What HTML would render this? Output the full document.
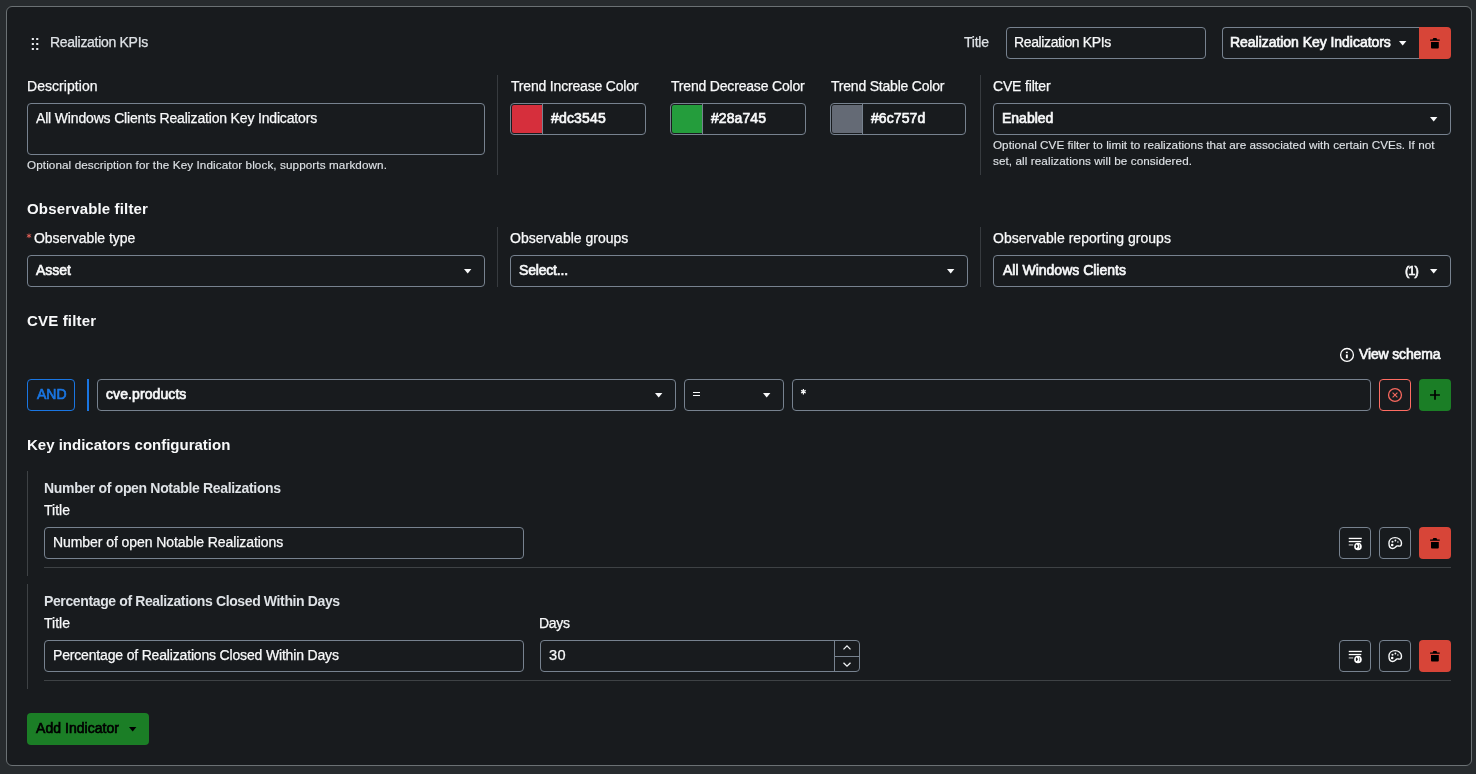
<!DOCTYPE html><html><head><meta charset="utf-8"><title>Realization KPIs</title><style>
*{box-sizing:border-box;margin:0;padding:0}
html,body{width:1476px;height:774px;overflow:hidden;background:#272b2e;font-family:"Liberation Sans",sans-serif}
.a{position:absolute}
.card{left:6px;top:6px;width:1466px;height:760px;border:1px solid #6b7174;border-radius:6px;background:#181b1e}
.box{border:1px solid #77828f;border-radius:4px}
.t{white-space:pre;will-change:transform;-webkit-font-smoothing:antialiased}
.sep{width:1px;background:#373b3f}
.hr{height:1px;background:#3e4245}
svg{position:absolute;overflow:visible}
</style></head><body>
<div class="a card"></div>
<svg style="left:0;top:0" width="60" height="60"><rect x="31.8" y="38" width="2.1" height="2" fill="#e6e9ec"/><rect x="31.8" y="43" width="2.1" height="2" fill="#e6e9ec"/><rect x="31.8" y="48" width="2.1" height="2" fill="#e6e9ec"/><rect x="36.2" y="38" width="2.1" height="2" fill="#e6e9ec"/><rect x="36.2" y="43" width="2.1" height="2" fill="#e6e9ec"/><rect x="36.2" y="48" width="2.1" height="2" fill="#e6e9ec"/></svg>
<div class="a box" style="left:1006px;top:27px;width:200px;height:32px;"></div>
<div class="a box" style="left:1222px;top:27px;width:197px;height:32px;border-right:none;border-radius:4px 0 0 4px"></div>
<div class="a " style="left:1419px;top:27px;width:32px;height:32px;background:#d74538;border:none;border-radius:0 4px 4px 0"></div>
<svg style="left:1399.1px;top:40.8px" width="7.4" height="4.6" viewBox="0 0 7.4 4.6"><path d="M0,0H7.4L3.7,4.6Z" fill="#f8f9fa"/></svg>
<div class="a box" style="left:27px;top:103px;width:458px;height:52px;"></div>
<div class="a box" style="left:510px;top:103px;width:136px;height:32px;"></div>
<div class="a " style="left:512px;top:105px;width:29.5px;height:28px;background:#d62f3c;border-radius:2px 0 0 2px"></div>
<div class="a " style="left:542px;top:103px;width:1px;height:32px;background:#77828f"></div>
<div class="a box" style="left:670px;top:103px;width:136px;height:32px;"></div>
<div class="a " style="left:672px;top:105px;width:29.5px;height:28px;background:#249d3c;border-radius:2px 0 0 2px"></div>
<div class="a " style="left:702px;top:103px;width:1px;height:32px;background:#77828f"></div>
<div class="a box" style="left:830px;top:103px;width:136px;height:32px;"></div>
<div class="a " style="left:832px;top:105px;width:29.5px;height:28px;background:#646a75;border-radius:2px 0 0 2px"></div>
<div class="a " style="left:862px;top:103px;width:1px;height:32px;background:#77828f"></div>
<div class="a box" style="left:993px;top:103px;width:458px;height:32px;"></div>
<svg style="left:1430.1px;top:116.8px" width="7.4" height="4.6" viewBox="0 0 7.4 4.6"><path d="M0,0H7.4L3.7,4.6Z" fill="#f8f9fa"/></svg>
<div class="a sep" style="left:497px;top:75px;width:1px;height:100px;"></div>
<div class="a sep" style="left:497px;top:227px;width:1px;height:60px;"></div>
<div class="a sep" style="left:980px;top:75px;width:1px;height:100px;"></div>
<div class="a sep" style="left:980px;top:227px;width:1px;height:60px;"></div>
<div class="a box" style="left:27px;top:255px;width:458px;height:32px;"></div>
<svg style="left:464.1px;top:268.8px" width="7.4" height="4.6" viewBox="0 0 7.4 4.6"><path d="M0,0H7.4L3.7,4.6Z" fill="#f8f9fa"/></svg>
<div class="a box" style="left:510px;top:255px;width:458px;height:32px;"></div>
<svg style="left:947.1px;top:268.8px" width="7.4" height="4.6" viewBox="0 0 7.4 4.6"><path d="M0,0H7.4L3.7,4.6Z" fill="#f8f9fa"/></svg>
<div class="a box" style="left:993px;top:255px;width:458px;height:32px;"></div>
<svg style="left:1430.1px;top:268.8px" width="7.4" height="4.6" viewBox="0 0 7.4 4.6"><path d="M0,0H7.4L3.7,4.6Z" fill="#f8f9fa"/></svg>
<div class="a box" style="left:27px;top:379px;width:48px;height:32px;border-color:#1a76e2"></div>
<div class="a " style="left:87px;top:379px;width:2px;height:32px;background:#1a76e2"></div>
<div class="a box" style="left:97px;top:379px;width:579px;height:32px;"></div>
<svg style="left:655.1px;top:392.8px" width="7.4" height="4.6" viewBox="0 0 7.4 4.6"><path d="M0,0H7.4L3.7,4.6Z" fill="#f8f9fa"/></svg>
<div class="a box" style="left:684px;top:379px;width:100px;height:32px;"></div>
<svg style="left:763.1px;top:392.8px" width="7.4" height="4.6" viewBox="0 0 7.4 4.6"><path d="M0,0H7.4L3.7,4.6Z" fill="#f8f9fa"/></svg>
<div class="a box" style="left:792px;top:379px;width:579px;height:32px;"></div>
<div class="a box" style="left:1379px;top:379px;width:32px;height:32px;border-color:#ff6d63"></div>
<div class="a box" style="left:1419px;top:379px;width:32px;height:32px;background:#1b7e26;border:none"></div>
<div class="a " style="left:27px;top:471px;width:1px;height:105px;background:#3e4245"></div>
<div class="a box" style="left:44px;top:527px;width:480px;height:32px;"></div>
<div class="a box" style="left:1339px;top:527px;width:32px;height:32px;"></div>
<div class="a box" style="left:1379px;top:527px;width:32px;height:32px;"></div>
<div class="a box" style="left:1419px;top:527px;width:32px;height:32px;background:#d74538;border:none"></div>
<div class="a hr" style="left:44px;top:567px;width:1407px;height:1px;"></div>
<div class="a " style="left:27px;top:584px;width:1px;height:105px;background:#3e4245"></div>
<div class="a box" style="left:44px;top:640px;width:480px;height:32px;"></div>
<div class="a box" style="left:1339px;top:640px;width:32px;height:32px;"></div>
<div class="a box" style="left:1379px;top:640px;width:32px;height:32px;"></div>
<div class="a box" style="left:1419px;top:640px;width:32px;height:32px;background:#d74538;border:none"></div>
<div class="a hr" style="left:44px;top:680px;width:1407px;height:1px;"></div>
<div class="a box" style="left:540px;top:640px;width:320px;height:32px;"></div>
<div class="a " style="left:834px;top:640px;width:1px;height:32px;background:#77828f"></div>
<div class="a " style="left:834px;top:656px;width:26px;height:1px;background:#77828f"></div>
<div class="a box" style="left:27px;top:713px;width:122px;height:32px;background:#1b7e26;border:none"></div>
<svg style="left:128.6px;top:726.8px" width="7.4" height="4.6" viewBox="0 0 7.4 4.6"><path d="M0,0H7.4L3.7,4.6Z" fill="#000"/></svg>
<div class="a t" style="left:50.00px;top:34.45px;font:400 14px/16px 'Liberation Sans',sans-serif;letter-spacing:-0.3px;color:#dee2e6;-webkit-text-stroke:0.25px currentColor">Realization KPIs</div>
<div class="a t" style="left:964.00px;top:34.45px;font:400 14px/16px 'Liberation Sans',sans-serif;letter-spacing:-0.25px;color:#dee2e6;-webkit-text-stroke:0.25px currentColor">Title</div>
<div class="a t" style="left:1014.00px;top:34.45px;font:400 14px/16px 'Liberation Sans',sans-serif;letter-spacing:-0.367px;color:#f8f9fa;-webkit-text-stroke:0.25px currentColor">Realization KPIs</div>
<div class="a t" style="left:1230.00px;top:34.45px;font:400 14px/16px 'Liberation Sans',sans-serif;letter-spacing:-0.04px;color:#f8f9fa;-webkit-text-stroke:0.65px currentColor">Realization Key Indicators</div>
<div class="a t" style="left:26.50px;top:78.45px;font:400 14px/16px 'Liberation Sans',sans-serif;letter-spacing:0.05px;color:#f8f9fa;-webkit-text-stroke:0.25px currentColor">Description</div>
<div class="a t" style="left:510.50px;top:78.45px;font:400 14px/16px 'Liberation Sans',sans-serif;letter-spacing:-0.184px;color:#f8f9fa;-webkit-text-stroke:0.25px currentColor">Trend Increase Color</div>
<div class="a t" style="left:670.50px;top:78.45px;font:400 14px/16px 'Liberation Sans',sans-serif;letter-spacing:-0.184px;color:#f8f9fa;-webkit-text-stroke:0.25px currentColor">Trend Decrease Color</div>
<div class="a t" style="left:830.50px;top:78.45px;font:400 14px/16px 'Liberation Sans',sans-serif;letter-spacing:-0.206px;color:#f8f9fa;-webkit-text-stroke:0.25px currentColor">Trend Stable Color</div>
<div class="a t" style="left:992.50px;top:78.45px;font:400 14px/16px 'Liberation Sans',sans-serif;letter-spacing:-0.167px;color:#f8f9fa;-webkit-text-stroke:0.25px currentColor">CVE filter</div>
<div class="a t" style="left:36.00px;top:110.45px;font:400 14px/16px 'Liberation Sans',sans-serif;letter-spacing:-0.167px;color:#f8f9fa;-webkit-text-stroke:0.25px currentColor">All Windows Clients Realization Key Indicators</div>
<div class="a t" style="left:551.00px;top:110.45px;font:400 14px/16px 'Liberation Sans',sans-serif;letter-spacing:0.167px;color:#f8f9fa;-webkit-text-stroke:0.65px currentColor">#dc3545</div>
<div class="a t" style="left:711.00px;top:110.45px;font:400 14px/16px 'Liberation Sans',sans-serif;letter-spacing:0.083px;color:#f8f9fa;-webkit-text-stroke:0.65px currentColor">#28a745</div>
<div class="a t" style="left:871.00px;top:110.45px;font:400 14px/16px 'Liberation Sans',sans-serif;letter-spacing:0.083px;color:#f8f9fa;-webkit-text-stroke:0.65px currentColor">#6c757d</div>
<div class="a t" style="left:1001.50px;top:110.45px;font:400 14px/16px 'Liberation Sans',sans-serif;letter-spacing:0.0px;color:#f8f9fa;-webkit-text-stroke:0.65px currentColor">Enabled</div>
<div class="a t" style="left:26.50px;top:157.25px;font:400 11.7px/16px 'Liberation Sans',sans-serif;letter-spacing:0.097px;color:#dee2e6;-webkit-text-stroke:0.12px currentColor">Optional description for the Key Indicator block, supports markdown.</div>
<div class="a t" style="left:992.50px;top:137.25px;font:400 11.7px/16px 'Liberation Sans',sans-serif;letter-spacing:0.034px;color:#dee2e6;-webkit-text-stroke:0.12px currentColor">Optional CVE filter to limit to realizations that are associated with certain CVEs. If not</div>
<div class="a t" style="left:992.50px;top:153.25px;font:400 11.7px/16px 'Liberation Sans',sans-serif;letter-spacing:0.087px;color:#dee2e6;-webkit-text-stroke:0.12px currentColor">set, all realizations will be considered.</div>
<div class="a t" style="left:26.50px;top:201.10px;font:700 15px/16px 'Liberation Sans',sans-serif;letter-spacing:0.156px;color:#f8f9fa">Observable filter</div>
<div class="a t" style="left:33.70px;top:230.45px;font:400 14px/16px 'Liberation Sans',sans-serif;letter-spacing:-0.05px;color:#f8f9fa;-webkit-text-stroke:0.25px currentColor">Observable type</div>
<div class="a t" style="left:509.50px;top:230.45px;font:400 14px/16px 'Liberation Sans',sans-serif;letter-spacing:0.0px;color:#f8f9fa;-webkit-text-stroke:0.25px currentColor">Observable groups</div>
<div class="a t" style="left:992.50px;top:230.45px;font:400 14px/16px 'Liberation Sans',sans-serif;letter-spacing:0.019px;color:#f8f9fa;-webkit-text-stroke:0.25px currentColor">Observable reporting groups</div>
<div class="a t" style="left:36.00px;top:262.45px;font:400 14px/16px 'Liberation Sans',sans-serif;letter-spacing:0.0px;color:#f8f9fa;-webkit-text-stroke:0.65px currentColor">Asset</div>
<div class="a t" style="left:519.00px;top:262.45px;font:400 14px/16px 'Liberation Sans',sans-serif;letter-spacing:-0.188px;color:#f8f9fa;-webkit-text-stroke:0.65px currentColor">Select...</div>
<div class="a t" style="left:1002.50px;top:262.45px;font:400 14px/16px 'Liberation Sans',sans-serif;letter-spacing:0.0px;color:#f8f9fa;-webkit-text-stroke:0.65px currentColor">All Windows Clients</div>
<div class="a t" style="left:1405.00px;top:262.80px;font:400 13px/16px 'Liberation Sans',sans-serif;letter-spacing:-1.0px;color:#f8f9fa;-webkit-text-stroke:0.65px currentColor">(1)</div>
<div class="a t" style="left:26.50px;top:313.10px;font:700 15px/16px 'Liberation Sans',sans-serif;letter-spacing:0.167px;color:#f8f9fa">CVE filter</div>
<div class="a t" style="left:1359.00px;top:346.45px;font:400 14px/16px 'Liberation Sans',sans-serif;letter-spacing:-0.15px;color:#f8f9fa;-webkit-text-stroke:0.65px currentColor">View schema</div>
<div class="a t" style="left:36.50px;top:386.45px;font:400 14px/16px 'Liberation Sans',sans-serif;letter-spacing:0.0px;color:#1a76e2;-webkit-text-stroke:0.65px currentColor">AND</div>
<div class="a t" style="left:106.00px;top:386.45px;font:400 14px/16px 'Liberation Sans',sans-serif;letter-spacing:0.091px;color:#f8f9fa;-webkit-text-stroke:0.65px currentColor">cve.products</div>
<div class="a t" style="left:26.50px;top:437.10px;font:700 15px/16px 'Liberation Sans',sans-serif;letter-spacing:0.0px;color:#f8f9fa">Key indicators configuration</div>
<div class="a t" style="left:43.50px;top:480.45px;font:700 14px/16px 'Liberation Sans',sans-serif;letter-spacing:-0.324px;color:#dee2e6">Number of open Notable Realizations</div>
<div class="a t" style="left:44.00px;top:502.45px;font:400 14px/16px 'Liberation Sans',sans-serif;letter-spacing:0.0px;color:#f8f9fa;-webkit-text-stroke:0.25px currentColor">Title</div>
<div class="a t" style="left:52.50px;top:534.45px;font:400 14px/16px 'Liberation Sans',sans-serif;letter-spacing:-0.074px;color:#f8f9fa;-webkit-text-stroke:0.25px currentColor">Number of open Notable Realizations</div>
<div class="a t" style="left:43.50px;top:593.45px;font:700 14px/16px 'Liberation Sans',sans-serif;letter-spacing:-0.375px;color:#dee2e6">Percentage of Realizations Closed Within Days</div>
<div class="a t" style="left:44.00px;top:615.45px;font:400 14px/16px 'Liberation Sans',sans-serif;letter-spacing:0.0px;color:#f8f9fa;-webkit-text-stroke:0.25px currentColor">Title</div>
<div class="a t" style="left:538.80px;top:615.45px;font:400 14px/16px 'Liberation Sans',sans-serif;letter-spacing:-0.267px;color:#f8f9fa;-webkit-text-stroke:0.25px currentColor">Days</div>
<div class="a t" style="left:52.50px;top:647.45px;font:400 14px/16px 'Liberation Sans',sans-serif;letter-spacing:-0.17px;color:#f8f9fa;-webkit-text-stroke:0.25px currentColor">Percentage of Realizations Closed Within Days</div>
<div class="a t" style="left:548.70px;top:647.24px;font:400 14.6px/16px 'Liberation Sans',sans-serif;letter-spacing:0.3px;color:#f8f9fa;-webkit-text-stroke:0.25px currentColor">30</div>
<div class="a t" style="left:36.00px;top:720.45px;font:400 14px/16px 'Liberation Sans',sans-serif;letter-spacing:0.042px;color:#000;-webkit-text-stroke:0.65px currentColor">Add Indicator</div>
<svg style="left:23px;top:229.5px" width="12" height="12" viewBox="0 0 12 12"><path d="M6,3.5V8.1M3.8,4.5L8.2,7.1M8.2,4.5L3.8,7.1" stroke="#f2665c" stroke-width="0.85" fill="none"/></svg>
<svg style="left:798px;top:386px" width="12" height="12" viewBox="0 0 12 12"><path d="M5.4,3V8.4M3.1,4.35L7.7,7.05M7.7,4.35L3.1,7.05" stroke="#f8f9fa" stroke-width="1.25" fill="none"/></svg>
<div class="a " style="left:693px;top:392.1px;width:7px;height:1.2999999999999545px;background:#f8f9fa"></div>
<div class="a " style="left:693px;top:395.2px;width:7px;height:1.3000000000000114px;background:#f8f9fa"></div>
<svg style="left:1419px;top:27px" width="32" height="32" viewBox="0 0 32 32"><path d="M14.4,11.1H17.4L18.2,12.4H20.7V13.8H11.1V12.4H13.6Z M12,15H19.8V20.6a0.9,0.9 0 0 1 -0.9,0.9H12.9a0.9,0.9 0 0 1 -0.9,-0.9Z" fill="#000"/></svg>
<svg style="left:1379px;top:379px" width="32" height="32" viewBox="0 0 32 32"><circle cx="16" cy="16" r="6.45" fill="none" stroke="#f7685e" stroke-width="1.3"/><path d="M13.6,13.6L18.4,18.4M18.4,13.6L13.6,18.4" stroke="#f7685e" stroke-width="1.1"/></svg>
<svg style="left:1419px;top:379px" width="32" height="32" viewBox="0 0 32 32"><path d="M11,16H20.9M16,11V20.8" stroke="#000" stroke-width="1.7"/></svg>
<svg style="left:1339px;top:527px" width="32" height="32" viewBox="0 0 32 32"><rect x="9.75" y="10.8" width="13.05" height="1.3" fill="#fff"/><rect x="9.75" y="13.9" width="12.5" height="1.3" fill="#fff"/><rect x="9.75" y="17.2" width="4.45" height="1.4" fill="#fff" opacity=".6"/><circle cx="18.95" cy="19.55" r="3.8" fill="#fff"/><path d="M16.9,17.9Q17.3,17.3 17.9,17.5L18.95,19.2L17.9,20.9Q17.3,21.2 16.9,20.6Z" fill="#181b1e"/><rect x="20.15" y="17.5" width="0.75" height="3.6" fill="#181b1e" opacity=".75"/></svg>
<svg style="left:1379px;top:527px" width="32" height="32" viewBox="0 0 32 32"><path d="M16,10.65C12.3,10.65 9.95,13.2 9.95,16.3C9.95,19.4 11.6,21.45 13.6,21.45C15.6,21.45 16.4,20 17.6,19.1C18.6,18.4 19.6,19.3 20.8,19.1C22,18.9 22.5,17.5 22.5,16C22.5,13 19.6,10.65 16,10.65Z" fill="none" stroke="#f8f9fa" stroke-width="1.4"/><circle cx="13.5" cy="14.7" r="1.05" fill="#f8f9fa"/><circle cx="16.4" cy="13.5" r="0.9" fill="#f8f9fa"/><rect x="18.1" y="14.25" width="1.5" height="1.5" fill="#a9adb1"/><circle cx="13.2" cy="18" r="1.3" fill="#fff"/></svg>
<svg style="left:1419px;top:527px" width="32" height="32" viewBox="0 0 32 32"><path d="M14.4,11.1H17.4L18.2,12.4H20.7V13.8H11.1V12.4H13.6Z M12,15H19.8V20.6a0.9,0.9 0 0 1 -0.9,0.9H12.9a0.9,0.9 0 0 1 -0.9,-0.9Z" fill="#000"/></svg>
<svg style="left:1339px;top:640px" width="32" height="32" viewBox="0 0 32 32"><rect x="9.75" y="10.8" width="13.05" height="1.3" fill="#fff"/><rect x="9.75" y="13.9" width="12.5" height="1.3" fill="#fff"/><rect x="9.75" y="17.2" width="4.45" height="1.4" fill="#fff" opacity=".6"/><circle cx="18.95" cy="19.55" r="3.8" fill="#fff"/><path d="M16.9,17.9Q17.3,17.3 17.9,17.5L18.95,19.2L17.9,20.9Q17.3,21.2 16.9,20.6Z" fill="#181b1e"/><rect x="20.15" y="17.5" width="0.75" height="3.6" fill="#181b1e" opacity=".75"/></svg>
<svg style="left:1379px;top:640px" width="32" height="32" viewBox="0 0 32 32"><path d="M16,10.65C12.3,10.65 9.95,13.2 9.95,16.3C9.95,19.4 11.6,21.45 13.6,21.45C15.6,21.45 16.4,20 17.6,19.1C18.6,18.4 19.6,19.3 20.8,19.1C22,18.9 22.5,17.5 22.5,16C22.5,13 19.6,10.65 16,10.65Z" fill="none" stroke="#f8f9fa" stroke-width="1.4"/><circle cx="13.5" cy="14.7" r="1.05" fill="#f8f9fa"/><circle cx="16.4" cy="13.5" r="0.9" fill="#f8f9fa"/><rect x="18.1" y="14.25" width="1.5" height="1.5" fill="#a9adb1"/><circle cx="13.2" cy="18" r="1.3" fill="#fff"/></svg>
<svg style="left:1419px;top:640px" width="32" height="32" viewBox="0 0 32 32"><path d="M14.4,11.1H17.4L18.2,12.4H20.7V13.8H11.1V12.4H13.6Z M12,15H19.8V20.6a0.9,0.9 0 0 1 -0.9,0.9H12.9a0.9,0.9 0 0 1 -0.9,-0.9Z" fill="#000"/></svg>
<svg style="left:1335px;top:343px" width="32" height="24" viewBox="0 0 32 24"><circle cx="12" cy="11.9" r="6.4" fill="none" stroke="#fff" stroke-width="1.3"/><rect x="10.9" y="8.7" width="1.9" height="1.4" fill="#fff"/><rect x="10.9" y="11.5" width="1.9" height="3.8" fill="#fff"/></svg>
<svg style="left:828px;top:636px" width="40" height="40" viewBox="0 0 40 40"><path d="M15.5,13.4L19,9.9L22.5,13.4M15.5,26.7L19,30.2L22.5,26.7" fill="none" stroke="#f1f3f5" stroke-width="1.3"/></svg>
</body></html>
